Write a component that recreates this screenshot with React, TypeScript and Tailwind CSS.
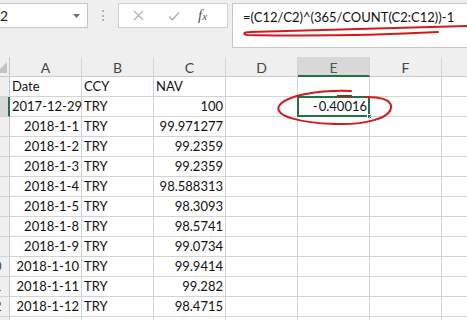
import React from 'react';

type Row = { a: string; b: string; c: string; e?: string };

const rows: Row[] = [
  { a: 'Date', b: 'CCY', c: 'NAV' },
  { a: '2017-12-29', b: 'TRY', c: '100', e: '-0.40016' },
  { a: '2018-1-1', b: 'TRY', c: '99.971277' },
  { a: '2018-1-2', b: 'TRY', c: '99.2359' },
  { a: '2018-1-3', b: 'TRY', c: '99.2359' },
  { a: '2018-1-4', b: 'TRY', c: '98.588313' },
  { a: '2018-1-5', b: 'TRY', c: '98.3093' },
  { a: '2018-1-8', b: 'TRY', c: '98.5741' },
  { a: '2018-1-9', b: 'TRY', c: '99.0734' },
  { a: '2018-1-10', b: 'TRY', c: '99.9414' },
  { a: '2018-1-11', b: 'TRY', c: '99.282' },
  { a: '2018-1-12', b: 'TRY', c: '98.4715' },
  { a: '', b: '', c: '' },
];

const columns = ['A', 'B', 'C', 'D', 'E', 'F', 'G'];

function Cell({ children, align = 'left', wide = false }: { children?: React.ReactNode; align?: 'left' | 'right'; wide?: boolean }) {
  return (
    <div
      className={`relative h-[20px] shrink-0 whitespace-nowrap border-b border-r border-[#d4d4d4] px-[2px] pt-[1px] text-[13px] leading-[17px] text-[#111] ${
        wide ? 'w-[80px]' : 'w-[72px]'
      } ${align === 'right' ? 'text-right' : 'text-left'}`}
    >
      {children}
    </div>
  );
}

export default function App() {
  return (
    <div className="relative h-[320px] w-[467px] overflow-hidden bg-white font-['Lato',sans-serif]">
      {/* formula bar area */}
      <div className="flex h-[57px] items-start bg-[#efefef] pt-[3px]">
        <div className="flex h-[25px] w-[88px] shrink-0 items-center overflow-hidden border border-l-0 border-[#c6c6c6] bg-white">
          <span className="ml-[-8px] text-[14px] leading-[20px] text-[#222]">E2</span>
          <svg className="ml-auto mr-[7px]" width="7" height="4" viewBox="0 0 7 4">
            <path d="M0 0 L7 0 L3.5 4 Z" fill="#6f6f6f" />
          </svg>
        </div>
        <div className="ml-[14px] mt-[7px] flex w-[2px] flex-col gap-[2.5px]">
          <span className="h-[2px] w-[2px] bg-[#b4b4b4]" />
          <span className="h-[2px] w-[2px] bg-[#b4b4b4]" />
          <span className="h-[2px] w-[2px] bg-[#b4b4b4]" />
        </div>
        <div className="ml-[14px] flex h-[25px] w-[110px] shrink-0 items-center border border-[#d0d0d0] bg-white">
          <svg className="ml-[14px]" width="11" height="11" viewBox="0 0 11 11">
            <path d="M1 1 L10 10 M10 1 L1 10" stroke="#b3b3b3" strokeWidth="1.3" />
          </svg>
          <svg className="ml-[24px]" width="12" height="10" viewBox="0 0 12 10">
            <path d="M1 5.5 L4.3 8.8 L11 1.5" stroke="#b3b3b3" strokeWidth="1.6" fill="none" />
          </svg>
          <span className="ml-[18px] font-['Liberation_Serif',serif] text-[15px] italic leading-[20px] text-[#555]">
            f<span className="text-[11px]">x</span>
          </span>
        </div>
        <div className="ml-[4px] h-[45px] flex-1 border-y border-l border-[#c6c6c6] bg-white pl-[10px] pt-[5px] text-[13px] leading-[16px] text-[#111]">
          =(C12/C2)^(365/COUNT(C2:C12))-1
        </div>
      </div>

      {/* column headers */}
      <div className="flex h-[20px] bg-[#efefef]">
        <div className="relative h-[20px] w-[10px] shrink-0 border-b border-r border-[#c9c9c9]">
          <svg className="absolute left-0 top-[5px]" width="8" height="12" viewBox="0 0 8 12">
            <path d="M7 0 L7 11 L-4 11 Z" fill="#c3c3c3" />
          </svg>
        </div>
        {columns.map((col) => (
          <div
            key={col}
            className={`h-[20px] w-[72px] shrink-0 border-r border-[#d4d4d4] pt-[1px] text-center text-[14px] leading-[19px] ${
              col === 'E' ? 'border-b-2 border-b-[#217346] bg-[#d8d8d8] text-[#2f6b48]' : 'border-b border-b-[#c9c9c9] text-[#444]'
            }`}
          >
            {col}
          </div>
        ))}
      </div>

      {/* rows */}
      {rows.map((row, i) => (
        <div key={i} className="flex">
          <div
            className={`h-[20px] w-[10px] shrink-0 overflow-hidden border-b border-[#d4d4d4] ${
              i === 1 ? 'border-r-2 border-r-[#217346] bg-[#d8d8d8]' : 'border-r border-r-[#c9c9c9] bg-[#efefef]'
            }`}
          >
            <div className="ml-[-19px] w-[26px] pt-[1px] text-center text-[13px] leading-[17px] text-[#444]">{i + 1}</div>
          </div>
          <Cell align={i === 0 ? 'left' : 'right'}>{row.a}</Cell>
          <Cell>{row.b}</Cell>
          <Cell align={i === 0 ? 'left' : 'right'}>{row.c}</Cell>
          <Cell />
          <Cell align="right">
            {row.e && (
              <>
                <span className="mr-[1px]">-</span>
                {row.e.slice(1)}
                <span className="absolute inset-x-[-1px] bottom-[-1px] top-[-1px] border-2 border-[#217346]" />
                <span className="absolute bottom-[-3px] right-[-3px] h-[5px] w-[5px] border border-white bg-[#217346]" />
              </>
            )}
          </Cell>
          <Cell />
          <Cell wide />
        </div>
      ))}

      {/* red pen annotations */}
      <svg className="pointer-events-none absolute left-0 top-0" width="467" height="320" viewBox="0 0 467 320">
        <path
          d="M438 32 C380 35 300 36 247 35 C243 34 243 32 250 32 C330 30 400 28 467 26"
          stroke="#d31a1a"
          strokeWidth="2"
          fill="none"
          strokeLinecap="round"
        />
        <path
          d="M351 91 C320 90 286 95 279 106 C274 116 300 123 335 124 C366 125 392 118 391 106 C390 99 378 97 366 97"
          stroke="#d31a1a"
          strokeWidth="2"
          fill="none"
          strokeLinecap="round"
        />
        <path d="M337 96 L352 96" stroke="#b02020" strokeWidth="2" />
      </svg>
    </div>
  );
}
